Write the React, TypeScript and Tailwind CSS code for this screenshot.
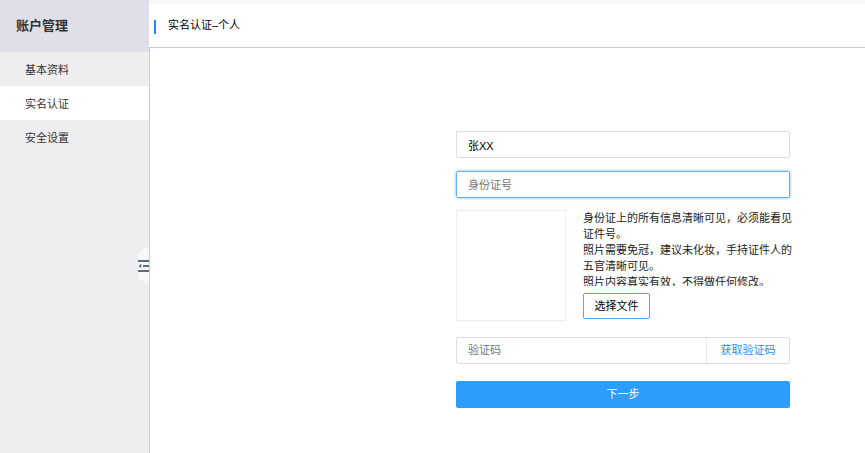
import { useState } from "react";

const menu = ["基本资料", "实名认证", "安全设置"];

function CollapseHandle() {
  return (
    <button
      type="button"
      aria-label="收起菜单"
      className="absolute top-[246px] right-0 h-[39px] w-[11px]"
    >
      <svg viewBox="0 0 11 39" className="block h-full w-full">
        <path d="M11 0L0 7V32L11 39Z" fill="#f8f8f8" />
        <g fill="#5c6b83">
          <rect x="0" y="14" width="11" height="2" />
          <rect x="5" y="19" width="6" height="2" />
          <rect x="0" y="24" width="11" height="2" />
          <path d="M0.5 20L3.3 17.8V22.2Z" />
        </g>
      </svg>
    </button>
  );
}

function Sidebar() {
  return (
    <aside className="relative w-[149px] shrink-0 bg-[#eeeef0]">
      <h1 className="flex h-[52px] items-center bg-[#dfdfe9] pl-4 text-[13px] font-bold text-[#333]">
        账户管理
      </h1>
      <nav>
        {menu.map((item) => (
          <a
            key={item}
            href="#"
            className={
              item === "实名认证"
                ? "flex h-[34px] items-center bg-white pt-0.5 pl-[25px] text-[#333]"
                : "flex h-[34px] items-center pt-0.5 pl-[25px] text-[#333]"
            }
          >
            {item}
          </a>
        ))}
      </nav>
      <CollapseHandle />
    </aside>
  );
}

function VerifyForm() {
  const [name, setName] = useState("张XX");
  return (
    <form className="w-[334px]" onSubmit={(e) => e.preventDefault()}>
      <input
        aria-label="姓名"
        value={name}
        onChange={(e) => setName(e.target.value)}
        className="block h-[27px] w-full rounded-xs border border-[#dcdcdc] px-[11px] text-black outline-none"
      />
      <input
        aria-label="身份证号"
        placeholder="身份证号"
        className="mt-[13px] block h-[27px] w-full rounded-xs border border-[#67b0f2] px-[11px] shadow-[0_0_3px_#67b0f2] outline-none placeholder:text-[#757575]"
      />
      <div className="mt-3 flex gap-[17px]">
        <div className="h-[111px] w-[110px] shrink-0 border border-[#eee]" />
        <div className="min-w-0 flex-1">
          <div className="-mr-2 h-[76px] overflow-hidden leading-4 text-[#222]">
            <p>身份证上的所有信息清晰可见，必须能看见证件号。</p>
            <p>照片需要免冠，建议未化妆，手持证件人的五官清晰可见。</p>
            <p>照片内容真实有效，不得做任何修改。</p>
          </div>
          <button
            type="button"
            className="mt-[7px] block h-[26px] w-[67px] rounded-xs border border-[#57a5fb] bg-white text-black"
          >
            选择文件
          </button>
        </div>
      </div>
      <div className="mt-4 flex h-[27px] rounded-xs border border-[#dcdcdc]">
        <input
          aria-label="验证码"
          placeholder="验证码"
          className="min-w-0 flex-1 px-[11px] outline-none placeholder:text-[#757575]"
        />
        <button
          type="button"
          className="w-[83px] border-l border-[#e8e8e8] text-[#2a8cfb]"
        >
          获取验证码
        </button>
      </div>
      <button
        type="submit"
        className="mt-[17px] block h-[27px] w-full rounded-xs bg-[#2d9dfc] text-white"
      >
        下一步
      </button>
    </form>
  );
}

export default function App() {
  return (
    <div className="flex min-h-screen bg-white font-['Liberation_Sans','Noto_Sans_CJK_SC',sans-serif] text-[11px]">
      <Sidebar />
      <main className="flex min-w-0 flex-1 flex-col">
        <header className="flex h-12 items-center border-t-4 border-b border-t-[#f8f8fb] border-b-[#ccc] pl-[5px]">
          <span className="mt-0.5 h-[14px] w-[2px] bg-[#1e8cff]" />
          <h2 className="ml-3 text-black">实名认证–个人</h2>
        </header>
        <div className="flex flex-1 justify-end border-l border-[#ccc] pt-[83px] pr-[75px]">
          <VerifyForm />
        </div>
      </main>
    </div>
  );
}
